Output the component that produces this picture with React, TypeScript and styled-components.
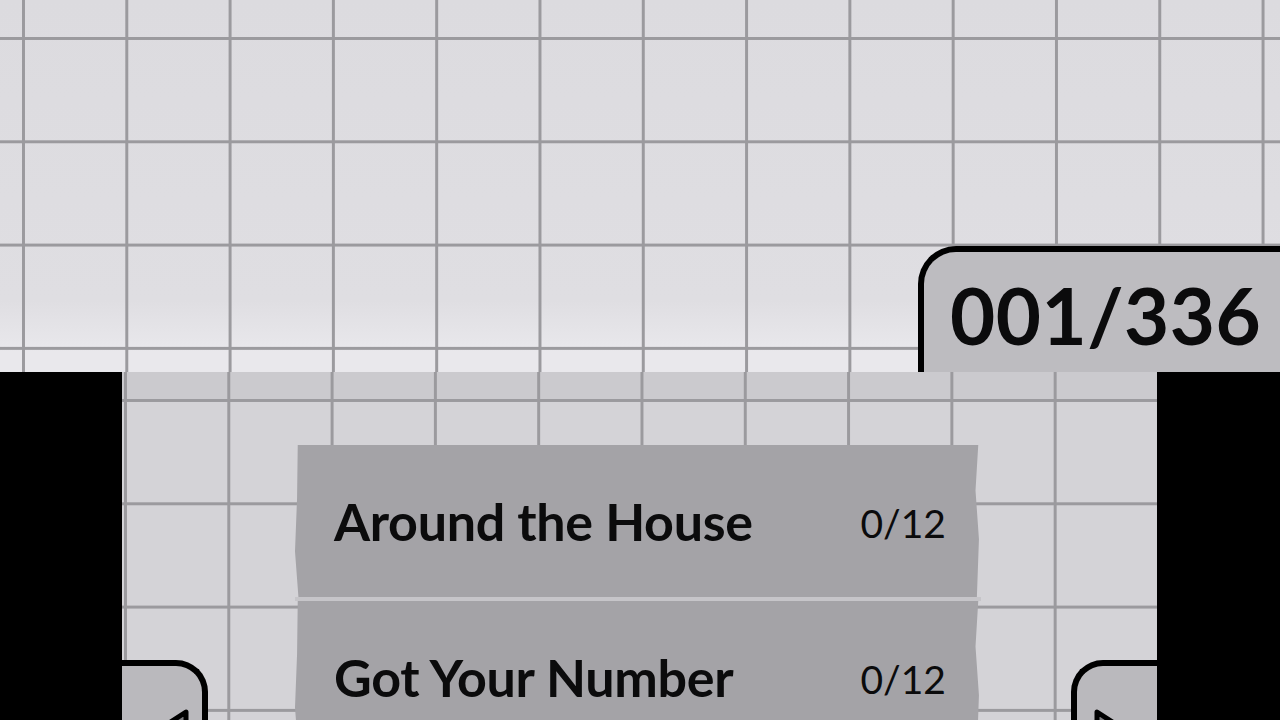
import styled, { createGlobalStyle } from "styled-components";

const GlobalStyle = createGlobalStyle`
  html, body {
    margin: 0;
    padding: 0;
    overflow: hidden;
  }
  body {
    font-family: Lato, "Open Sans", sans-serif;
    color: #0b0b0c;
  }
`;

const CELL = 103.3;
const LINE = "#9b9a9e";

const Page = styled.div`
  width: 1280px;
  height: 720px;
  overflow: hidden;
  display: flex;
  flex-direction: column;
`;

const TopArea = styled.div`
  height: 372px;
  flex-shrink: 0;
  display: flex;
  justify-content: flex-end;
  align-items: flex-end;
  background-color: #dddce0;
  background-image:
    linear-gradient(to right, ${LINE} 0 3px, transparent 3px),
    linear-gradient(to bottom, ${LINE} 0 3px, transparent 3px),
    linear-gradient(to bottom, #dcdbdf 0, #dfdee2 300px, #e9e8ec 352px);
  background-size: ${CELL}px ${CELL}px, ${CELL}px ${CELL}px, 100% 100%;
  background-position: 22px 37px, 22px 37px, 0 0;
`;

const CounterTab = styled.div`
  width: 330px;
  height: 120px;
  border-top: 6px solid #000;
  border-left: 6px solid #000;
  border-top-left-radius: 38px;
  background: #bdbcc0;
  display: flex;
  align-items: center;
  padding-left: 26px;
  box-sizing: content-box;
  font-size: 78px;
  font-weight: 700;
  letter-spacing: 0.5px;
  line-height: 1;
`;

const CounterText = styled.span`
  margin-top: 6px;
  white-space: nowrap;
`;

const Stage = styled.div`
  flex: 1;
  display: grid;
  grid-template-columns: 122px 1fr 123px;
`;

const SidePanel = styled.div`
  background: #000;
`;

const Middle = styled.div`
  position: relative;
  overflow: hidden;
  background-color: #d4d3d7;
  background-image:
    linear-gradient(to right, ${LINE} 0 3px, transparent 3px),
    linear-gradient(to bottom, ${LINE} 0 3px, transparent 3px),
    linear-gradient(to bottom, #cbcace 0 28px, #d4d3d7 28px);
  background-size: ${CELL}px ${CELL}px, ${CELL}px ${CELL}px, 100% 100%;
  background-position: 2px 27px, 2px 27px, 0 0;
  padding-top: 73px;
  padding-left: 173px;
`;

const List = styled.div`
  width: 686px;
  display: flex;
  flex-direction: column;
`;

const Item = styled.div`
  height: 152px;
  background: #a4a3a7;
  display: flex;
  align-items: center;
  justify-content: space-between;
  padding: 0 35px 0 39px;
  box-sizing: border-box;
  clip-path: polygon(
    0.4% 0, 99.6% 0, 99.2% 30%, 99.7% 62%, 99.4% 100%,
    0.5% 100%, 0 70%, 0.3% 35%
  );
`;

const Separator = styled.div`
  height: 4px;
  background: #c6c5c9;
`;

const Name = styled.span`
  font-size: 52px;
  font-weight: 700;
  letter-spacing: -0.3px;
  margin-top: 0;
  white-space: nowrap;
`;

const Count = styled.span`
  font-size: 39px;
  font-weight: 400;
  margin-top: 4px;
`;

const NavTab = styled.div<{ side: "left" | "right" }>`
  position: absolute;
  top: 288px;
  ${(p) => (p.side === "left" ? "left: 0;" : "right: 0;")}
  width: 80px;
  height: 80px;
  background: #bab9bd;
  border-top: 6px solid #000;
  ${(p) =>
    p.side === "left"
      ? "border-right: 6px solid #000; border-top-right-radius: 32px;"
      : "border-left: 6px solid #000; border-top-left-radius: 32px;"}
`;

const Arrow = styled.svg<{ side: "left" | "right" }>`
  position: absolute;
  top: 42px;
  ${(p) => (p.side === "left" ? "left: 18px;" : "left: 16px;")}
`;

const categories = [
  { name: "Around the House", count: "0/12" },
  { name: "Got Your Number", count: "0/12" },
];

export default function App() {
  return (
    <Page>
      <GlobalStyle />
      <TopArea>
        <CounterTab>
          <CounterText>001/336</CounterText>
        </CounterTab>
      </TopArea>
      <Stage>
        <SidePanel />
        <Middle>
          <List>
            {categories.map((c, i) => (
              <div key={c.name}>
                {i > 0 && <Separator />}
                <Item>
                  <Name>{c.name}</Name>
                  <Count>{c.count}</Count>
                </Item>
              </div>
            ))}
          </List>
          <NavTab side="left">
            <Arrow side="left" width="50" height="60" viewBox="0 0 50 60">
              <path
                d="M46 4 L6 30 L46 56 Z"
                fill="#7d7c80"
                stroke="#000"
                strokeWidth="5"
                strokeLinejoin="round"
              />
            </Arrow>
          </NavTab>
          <NavTab side="right">
            <Arrow side="right" width="50" height="60" viewBox="0 0 50 60">
              <path
                d="M4 4 L44 30 L4 56 Z"
                fill="#7d7c80"
                stroke="#000"
                strokeWidth="5"
                strokeLinejoin="round"
              />
            </Arrow>
          </NavTab>
        </Middle>
        <SidePanel />
      </Stage>
    </Page>
  );
}
